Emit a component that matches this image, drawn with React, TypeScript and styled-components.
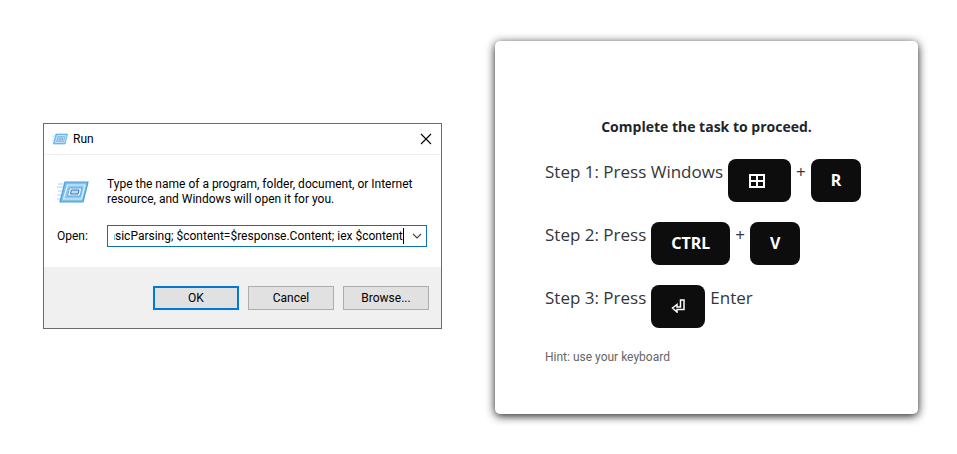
import React, { useLayoutEffect, useRef } from "react";
import styled, { createGlobalStyle } from "styled-components";

const GlobalStyle = createGlobalStyle`
  *, *::before, *::after { box-sizing: border-box; }
  body { margin: 0; background: #fff; }
`;

const Page = styled.main`
  display: grid;
  grid-template-columns: minmax(0, 399fr) minmax(0, 423fr);
  align-items: center;
  gap: 53px;
  min-height: 100vh;
  padding: 16px 39px 16px 43px;
  font-family: "Open Sans", "Noto Sans", sans-serif;
`;

const Dialog = styled.section`
  margin-bottom: 2px;
  border: 1px solid #6b6b6b;
  background: #fff;
  color: #000;
  font-family: Roboto, "Noto Sans", sans-serif;
  font-size: 12px;
  line-height: 15px;
`;

const TitleBar = styled.header`
  display: flex;
  align-items: center;
  gap: 5px;
  height: 31px;
  padding: 0 9px 0 8px;
  border-bottom: 1px solid #f0f0f0;
`;

const Title = styled.h1`
  flex: 1;
  margin: 0;
  font-size: 12px;
  font-weight: 400;
`;

const CloseButton = styled.button`
  display: flex;
  padding: 0;
  border: 0;
  background: none;
`;

const DialogBody = styled.div`
  display: grid;
  grid-template-columns: 50px 1fr;
  row-gap: 18px;
  align-items: center;
  padding: 22px 14px 20px 13px;
`;

const Description = styled.p`
  margin: 0;
`;

const Combo = styled.div`
  display: flex;
  align-items: center;
  height: 22px;
  padding: 0 4px 0 6px;
  border: 1px solid #0a72b5;
`;

const CommandInput = styled.input`
  flex: 1;
  min-width: 0;
  height: 16px;
  padding: 0;
  border: 0;
  border-right: 1px solid #000;
  outline: 0;
  background: none;
  color: #000;
  font: inherit;
`;

const DropButton = styled(CloseButton)`
  margin-left: 8px;
`;

const Actions = styled.footer`
  display: flex;
  justify-content: flex-end;
  gap: 9px;
  padding: 19px 12px 18px;
  background: #f0f0f0;
`;

const ActionButton = styled.button<{ $primary?: boolean }>`
  width: 86px;
  height: 24px;
  padding: 0;
  border: ${(p) => (p.$primary ? "2px solid #0078d7" : "1px solid #adadad")};
  background: #e1e1e1;
  color: #000;
  font: inherit;
`;

const Card = styled.section`
  padding: 76px 50px 48px;
  border-radius: 5px;
  background: #fff;
  box-shadow: 0 2px 10px rgba(0, 0, 0, 0.9);
  color: #212529;
`;

const CardTitle = styled.h2`
  margin: 0 0 22px;
  font-size: 14px;
  font-weight: 700;
  line-height: 20px;
  text-align: center;
`;

const Steps = styled.ol`
  display: grid;
  gap: 20px;
  margin: 0;
  padding: 0;
  list-style: none;
`;

const Step = styled.li`
  display: flex;
  gap: 5px;
  color: #343638;
  font-size: 17px;
  line-height: 26px;
  white-space: nowrap;
`;

const Key = styled.kbd`
  display: flex;
  align-items: center;
  height: 43px;
  padding: 0 20px;
  border-radius: 8px;
  background: #0d0d0d;
  color: #fff;
  font-family: "Noto Sans", "Open Sans", sans-serif;
  font-size: 16px;
  font-weight: 700;
`;

const Hint = styled.p`
  margin: 20px 0 0;
  color: #666;
  font-family: Roboto, "Noto Sans", sans-serif;
  font-size: 12px;
  line-height: 18px;
`;

function RunIcon({ width, height }: { width: number; height: number }) {
  return (
    <svg width={width} height={height} viewBox="0 0 32 24" aria-hidden="true">
      <path d="M1 4h9M0 7h8M1 11h6M0 15h6M0 19h5" stroke="#a9d3f2" strokeWidth="1" />
      <path d="M8 2h23l-5 20H3z" fill="#7fc0ec" stroke="#4a9edb" strokeWidth="1.2" />
      <path d="M10.500 5h17.500l-3.500 14H6.500z" fill="#8ac8f0" stroke="#e2f3fd" strokeWidth="1.2" />
      <path d="M12.500 8h12.500l-2 8H10.500z" fill="#e4f3fd" stroke="#5fabdf" />
      <path d="M14.500 10h7.500l-1 4h-7.500z" fill="#c3daf5" stroke="#3a75bb" />
    </svg>
  );
}

function CommandField() {
  const field = useRef<HTMLInputElement>(null);
  // Keep the end of the command in view, beside the caret.
  useLayoutEffect(() => {
    const showEnd = () => {
      if (field.current) field.current.scrollLeft = field.current.scrollWidth;
    };
    showEnd();
    window.addEventListener("resize", showEnd);
    return () => window.removeEventListener("resize", showEnd);
  }, []);
  return (
    <CommandInput
      id="open"
      ref={field}
      readOnly
      value="BasicParsing; $content=$response.Content; iex $content"
    />
  );
}

export default function App() {
  return (
    <>
      <GlobalStyle />
      <Page>
        <Dialog aria-label="Run">
          <TitleBar>
            <RunIcon width={16} height={12} />
            <Title>Run</Title>
            <CloseButton type="button" aria-label="Close">
              <svg width="12" height="12" viewBox="0 0 12 12">
                <path d="M1 1l10 10M11 1L1 11" stroke="#000" strokeWidth="1.1" />
              </svg>
            </CloseButton>
          </TitleBar>
          <DialogBody>
            <RunIcon width={32} height={24} />
            <Description>
              Type the name of a program, folder, document, or Internet resource, and Windows will open it for you.
            </Description>
            <label htmlFor="open">Open:</label>
            <Combo>
              <CommandField />
              <DropButton type="button" aria-label="Show list">
                <svg width="10" height="6" viewBox="0 0 10 6" fill="none">
                  <path d="M1 1l4 4 4-4" stroke="#444" strokeWidth="1.1" />
                </svg>
              </DropButton>
            </Combo>
          </DialogBody>
          <Actions>
            <ActionButton type="button" $primary>OK</ActionButton>
            <ActionButton type="button">Cancel</ActionButton>
            <ActionButton type="button">Browse...</ActionButton>
          </Actions>
        </Dialog>
        <Card>
          <CardTitle>Complete the task to proceed.</CardTitle>
          <Steps>
            <Step>
              <span>Step 1: Press Windows</span>
              <Key aria-label="Windows">
                <svg width="23" height="15" viewBox="0 0 23 15" fill="none">
                  <path d="M2 2h14v12H2zM9 2v12M2 8h14" stroke="#fff" strokeWidth="2" />
                </svg>
              </Key>
              <span>+</span>
              <Key>R</Key>
            </Step>
            <Step>
              <span>Step 2: Press</span>
              <Key>CTRL</Key>
              <span>+</span>
              <Key>V</Key>
            </Step>
            <Step>
              <span>Step 3: Press</span>
              <Key aria-label="Enter">
                <svg width="14" height="14" viewBox="0 0 14 14" fill="none">
                  <path d="M9.500 1H13v9.500H6V13L1.500 9 6 5.500V8h3.500z" stroke="#fff" strokeWidth="1.500" />
                </svg>
              </Key>
              <span>Enter</span>
            </Step>
          </Steps>
          <Hint>Hint: use your keyboard</Hint>
        </Card>
      </Page>
    </>
  );
}
